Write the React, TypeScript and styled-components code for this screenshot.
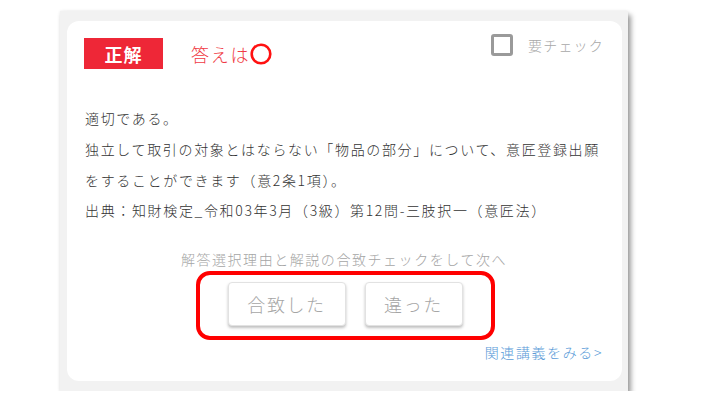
import React from 'react';
import styled, { createGlobalStyle } from 'styled-components';

const GlobalStyle = createGlobalStyle`
  html, body {
    margin: 0;
    padding: 0;
    background: #fff;
  }
  body {
    font-family: "Noto Sans CJK JP", "Noto Sans", sans-serif;
    font-weight: 300;
  }
`;

// серая рамка вокруг карточки
const Frame = styled.div`
  width: 568px;
  height: 380px;
  margin: 11px 0 0 60px;
  box-sizing: border-box;
  padding: 10px 6px 10px 7px;
  background: #f2f2f2;
  box-shadow: 3px 4px 5px rgba(0, 0, 0, 0.38), 0 0 3px rgba(0, 0, 0, 0.08);
`;

const Card = styled.div`
  height: 100%;
  box-sizing: border-box;
  background: #fff;
  border-radius: 12px;
  padding: 13px 18px 18px 17px;
  display: flex;
  flex-direction: column;
`;

const Header = styled.div`
  display: flex;
  justify-content: space-between;
  align-items: flex-start;
`;

const Result = styled.div`
  display: flex;
  align-items: center;
  margin-top: 4px;
`;

const Badge = styled.div`
  width: 79px;
  height: 31px;
  background: #ee2737;
  color: #fff;
  font-size: 18px;
  font-weight: 700;
  letter-spacing: 1px;
  display: flex;
  align-items: center;
  justify-content: center;
`;

const Answer = styled.div`
  margin-left: 28px;
  display: flex;
  align-items: center;
  color: #f03a44;
  font-size: 18px;
  letter-spacing: 1.8px;
  line-height: 1;
`;

const CheckLabel = styled.label`
  display: flex;
  align-items: center;
  gap: 15px;
  color: #a8a8a8;
  font-size: 14px;
  letter-spacing: 1.2px;
`;

const CheckBox = styled.span`
  width: 22px;
  height: 22px;
  box-sizing: border-box;
  border: 3px solid #9a9a9a;
  border-radius: 3px;
`;

const Body = styled.div`
  margin-top: 34px;
  margin-left: 1px;
  color: #333;
  font-size: 14px;
  line-height: 30.8px;
  letter-spacing: 1.65px;
`;

const Line = styled.p`
  margin: 0;
`;

const Hint = styled.div`
  margin-top: 23px;
  text-align: center;
  color: #a5a5a5;
  font-size: 14px;
  line-height: 20px;
  letter-spacing: 1.55px;
`;

const Marked = styled.div`
  align-self: center;
  margin-top: 2px;
  margin-left: 2px;
  box-sizing: border-box;
  width: 299px;
  height: 69px;
  border: 4px solid #ff0000;
  border-radius: 14px;
  display: flex;
  justify-content: center;
  align-items: flex-start;
  padding-top: 7px;
  gap: 19px;
`;

const Choice = styled.button<{ $w: number }>`
  width: ${(p) => p.$w}px;
  height: 44px;
  background: #fff;
  border: 1px solid #e2e2e2;
  border-radius: 4px;
  box-shadow: 0 2px 3px rgba(0, 0, 0, 0.25);
  color: #a5a5a5;
  font-family: "Noto Sans CJK JP", "Noto Sans", sans-serif;
  font-weight: 300;
  font-size: 18px;
  letter-spacing: 1.6px;
  cursor: pointer;
`;

const MoreLink = styled.a`
  align-self: flex-end;
  margin-top: 2px;
  margin-right: 1px;
  color: #5a9bd8;
  font-size: 14px;
  line-height: 20px;
  letter-spacing: 1.6px;
  text-decoration: none;
`;

const Circle = () => (
  <svg width="22" height="22" viewBox="0 0 22 22" style={{ marginLeft: 0 }}>
    <circle cx="11" cy="11" r="9.3" fill="none" stroke="#ff1111" strokeWidth="2.6" />
  </svg>
);

const App: React.FC = () => {
  return (
    <>
      <GlobalStyle />
      <Frame>
        <Card>
          <Header>
            <Result>
              <Badge>正解</Badge>
              <Answer>
                答えは
                <Circle />
              </Answer>
            </Result>
            <CheckLabel>
              <CheckBox />
              要チェック
            </CheckLabel>
          </Header>

          <Body>
            <Line>適切である。</Line>
            <Line>独立して取引の対象とはならない「物品の部分」について、意匠登録出願</Line>
            <Line>をすることができます（意2条1項）。</Line>
            <Line>出典：知財検定_令和03年3月（3級）第12問-三肢択一（意匠法）</Line>
          </Body>

          <Hint>解答選択理由と解説の合致チェックをして次へ</Hint>

          <Marked>
            <Choice $w={118}>合致した</Choice>
            <Choice $w={98}>違った</Choice>
          </Marked>

          <MoreLink href="#">関連講義をみる&gt;</MoreLink>
        </Card>
      </Frame>
    </>
  );
};

export default App;
